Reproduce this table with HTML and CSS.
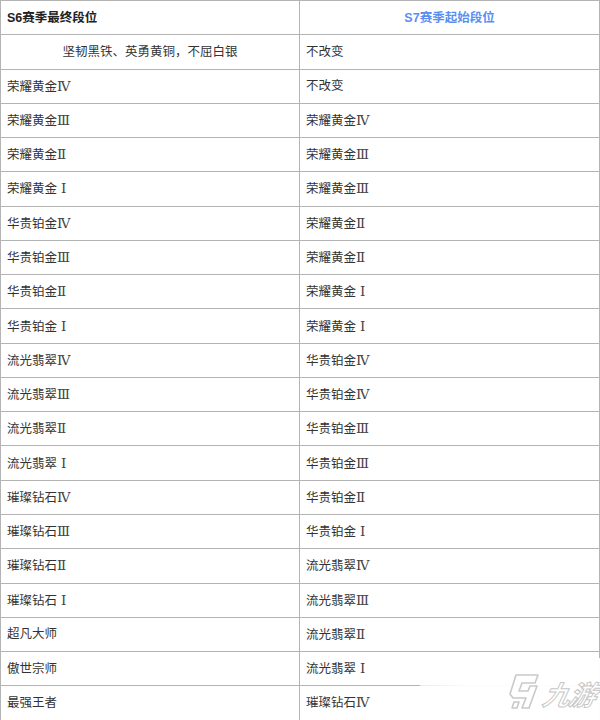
FILE: index.html
```html
<!DOCTYPE html>
<html lang="zh-CN">
<head>
<meta charset="utf-8">
<title>S6 / S7 段位继承</title>
<link rel="stylesheet" href="styles.css">
</head>
<body>
<div class="page">
<table class="rank-table">
  <colgroup>
    <col class="col-left">
    <col class="col-right">
  </colgroup>
  <thead>
    <tr>
      <th class="h-left">S6赛季最终段位</th>
      <th class="h-right">S7赛季起始段位</th>
    </tr>
  </thead>
  <tbody>
    <tr><td class="center">坚韧黑铁、英勇黄铜，不屈白银</td><td>不改变</td></tr>
    <tr><td>荣耀黄金<span class="rn">Ⅳ</span></td><td>不改变</td></tr>
    <tr><td>荣耀黄金<span class="rn">Ⅲ</span></td><td>荣耀黄金<span class="rn">Ⅳ</span></td></tr>
    <tr><td>荣耀黄金<span class="rn">Ⅱ</span></td><td>荣耀黄金<span class="rn">Ⅲ</span></td></tr>
    <tr><td>荣耀黄金<span class="rn sp">Ⅰ</span></td><td>荣耀黄金<span class="rn">Ⅲ</span></td></tr>
    <tr><td>华贵铂金<span class="rn">Ⅳ</span></td><td>荣耀黄金<span class="rn">Ⅱ</span></td></tr>
    <tr><td>华贵铂金<span class="rn">Ⅲ</span></td><td>荣耀黄金<span class="rn">Ⅱ</span></td></tr>
    <tr><td>华贵铂金<span class="rn">Ⅱ</span></td><td>荣耀黄金<span class="rn sp">Ⅰ</span></td></tr>
    <tr><td>华贵铂金<span class="rn sp">Ⅰ</span></td><td>荣耀黄金<span class="rn sp">Ⅰ</span></td></tr>
    <tr><td>流光翡翠<span class="rn">Ⅳ</span></td><td>华贵铂金<span class="rn">Ⅳ</span></td></tr>
    <tr><td>流光翡翠<span class="rn">Ⅲ</span></td><td>华贵铂金<span class="rn">Ⅳ</span></td></tr>
    <tr><td>流光翡翠<span class="rn">Ⅱ</span></td><td>华贵铂金<span class="rn">Ⅲ</span></td></tr>
    <tr><td>流光翡翠<span class="rn sp">Ⅰ</span></td><td>华贵铂金<span class="rn">Ⅲ</span></td></tr>
    <tr><td>璀璨钻石<span class="rn">Ⅳ</span></td><td>华贵铂金<span class="rn">Ⅱ</span></td></tr>
    <tr><td>璀璨钻石<span class="rn">Ⅲ</span></td><td>华贵铂金<span class="rn sp">Ⅰ</span></td></tr>
    <tr><td>璀璨钻石<span class="rn">Ⅱ</span></td><td>流光翡翠<span class="rn">Ⅳ</span></td></tr>
    <tr><td>璀璨钻石<span class="rn sp">Ⅰ</span></td><td>流光翡翠<span class="rn">Ⅲ</span></td></tr>
    <tr><td>超凡大师</td><td>流光翡翠<span class="rn">Ⅱ</span></td></tr>
    <tr><td>傲世宗师</td><td>流光翡翠<span class="rn sp">Ⅰ</span></td></tr>
    <tr><td>最强王者</td><td>璀璨钻石<span class="rn">Ⅳ</span></td></tr>
  </tbody>
</table>
<div class="watermark">
  <svg class="wm-logo" width="40" height="40" viewBox="0 0 40 40" aria-hidden="true">
    <path d="M14 3 L36 3 L33 11 L20 11 L17 19 L26 19 L28 14 L35 14 L27 36 L20 36 L24 26 L11 26 L8 22 Z" fill="none" stroke="#c9c9c9" stroke-width="1.6" stroke-linejoin="round"/>
    <path d="M12 30 L17 30 L15 36 L10 36 Z" fill="none" stroke="#c9c9c9" stroke-width="1.6" stroke-linejoin="round"/>
  </svg>
  <span class="wm-text">九游</span>
</div>
</div>
</body>
</html>
```
FILE: styles.css
```css
html, body {
  margin: 0;
  padding: 0;
  background: #ffffff;
}

.page {
  position: relative;
  width: 600px;
  height: 720px;
  overflow: hidden;
}

.rank-table {
  width: 599px;
  border-collapse: collapse;
  table-layout: fixed;
  font-family: "Liberation Sans", "Noto Sans CJK SC", sans-serif;
  font-size: 12.5px;
  color: #333333;
}

.col-left {
  width: 299px;
}

.col-right {
  width: 300px;
}

.rank-table tr {
  height: 34.27px;
}

.rank-table th,
.rank-table td {
  border: 1px solid #b4b4b4;
  padding: 0 6px;
  text-align: left;
  vertical-align: middle;
  line-height: 16px;
}

.rank-table th {
  font-weight: bold;
  color: #222222;
}

.rank-table th.h-right {
  text-align: center;
  color: #5a8ff0;
}

.rank-table td.center {
  text-align: center;
}

.rn {
  font-family: "DejaVu Serif", "Liberation Serif", serif;
  font-size: 13.5px;
  color: #444444;
}

.rn.sp {
  margin-left: 4px;
}

.watermark {
  position: absolute;
  left: 420px;
  top: 658px;
  width: 180px;
  height: 62px;
  background: linear-gradient(90deg, rgba(255,255,255,0.7) 0%, rgba(255,255,255,0.95) 25%, rgba(255,255,255,0.97) 100%);
  display: flex;
  align-items: center;
  justify-content: flex-end;
  gap: 2px;
  padding-right: 4px;
  box-sizing: border-box;
}

.wm-logo {
  display: block;
  margin-top: 6px;
}

.wm-text {
  font-family: "Noto Sans CJK SC", sans-serif;
  font-size: 27px;
  font-style: italic;
  font-weight: 700;
  color: transparent;
  -webkit-text-stroke: 1px #c6c6c6;
  letter-spacing: -1px;
  margin-top: 8px;
  transform: skewX(-12deg);
}
```
